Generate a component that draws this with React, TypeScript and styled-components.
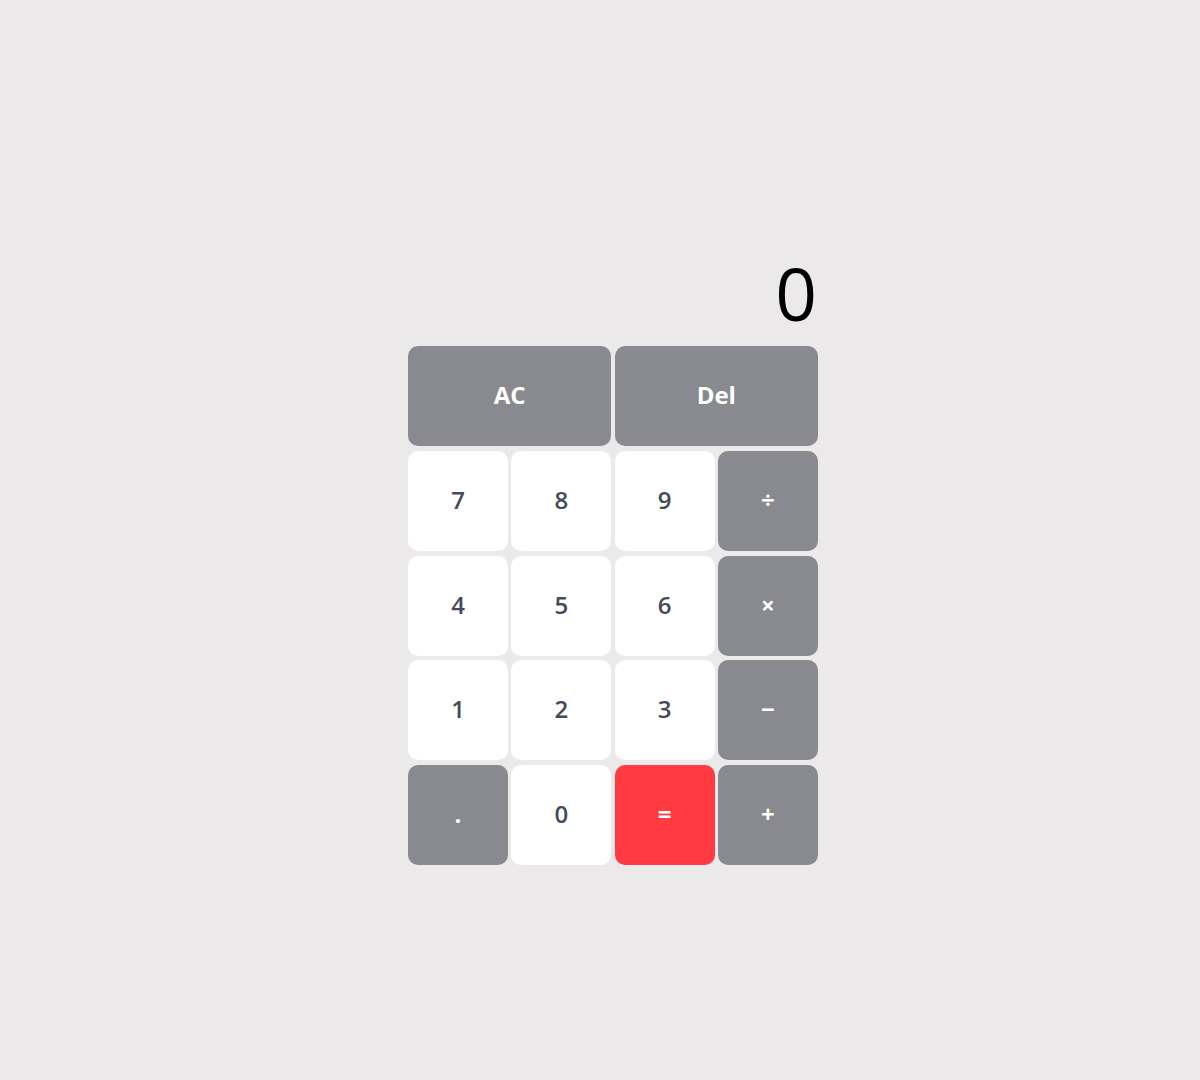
import React from "react";
import styled, { createGlobalStyle } from "styled-components";

const GlobalStyle = createGlobalStyle`
  html, body {
    margin: 0;
    padding: 0;
    background: #ebe9ea;
    font-family: "Open Sans", "Noto Sans", sans-serif;
  }
`;

const Page = styled.div`
  min-height: 100vh;
  box-sizing: border-box;
  padding-left: 26px;
  display: flex;
  align-items: center;
  justify-content: center;
`;

const Calculator = styled.div`
  width: 410px;
  display: flex;
  flex-direction: column;
`;

const Display = styled.div`
  height: 131px;
  display: flex;
  align-items: flex-end;
  justify-content: flex-end;
  box-sizing: border-box;
  padding-bottom: 17px;
  padding-right: 1px;
  font-size: 73px;
  line-height: 1;
  font-weight: 400;
  color: #000;
`;

const Keys = styled.div`
  display: grid;
  grid-template-columns: repeat(4, 100px);
  grid-auto-rows: 100px;
  column-gap: 3.33px;
  row-gap: 4.75px;
`;

type Variant = "digit" | "op" | "equals";

const Key = styled.button<{ $variant: Variant; $span?: number }>`
  grid-column: span ${(p) => p.$span ?? 1};
  border: none;
  border-radius: 10px;
  font-family: "Open Sans", "Noto Sans", sans-serif;
  font-size: 24px;
  font-weight: ${(p) => (p.$variant === "digit" ? 600 : 700)};
  display: flex;
  align-items: center;
  justify-content: center;
  padding: 0 0 3px;
  cursor: pointer;
  background: ${(p) =>
    p.$variant === "digit" ? "#ffffff" : p.$variant === "equals" ? "#ff3a40" : "#898a8f"};
  color: ${(p) => (p.$variant === "digit" ? "#434a58" : "#ffffff")};
`;

const keys: { label: string; variant: Variant; span?: number }[] = [
  { label: "AC", variant: "op", span: 2 },
  { label: "Del", variant: "op", span: 2 },
  { label: "7", variant: "digit" },
  { label: "8", variant: "digit" },
  { label: "9", variant: "digit" },
  { label: "÷", variant: "op" },
  { label: "4", variant: "digit" },
  { label: "5", variant: "digit" },
  { label: "6", variant: "digit" },
  { label: "×", variant: "op" },
  { label: "1", variant: "digit" },
  { label: "2", variant: "digit" },
  { label: "3", variant: "digit" },
  { label: "−", variant: "op" },
  { label: ".", variant: "op" },
  { label: "0", variant: "digit" },
  { label: "=", variant: "equals" },
  { label: "+", variant: "op" },
];

export default function App() {
  return (
    <>
      <GlobalStyle />
      <Page>
        <Calculator>
          <Display>0</Display>
          <Keys>
            {keys.map((k) => (
              <Key key={k.label} $variant={k.variant} $span={k.span}>
                {k.label}
              </Key>
            ))}
          </Keys>
        </Calculator>
      </Page>
    </>
  );
}
